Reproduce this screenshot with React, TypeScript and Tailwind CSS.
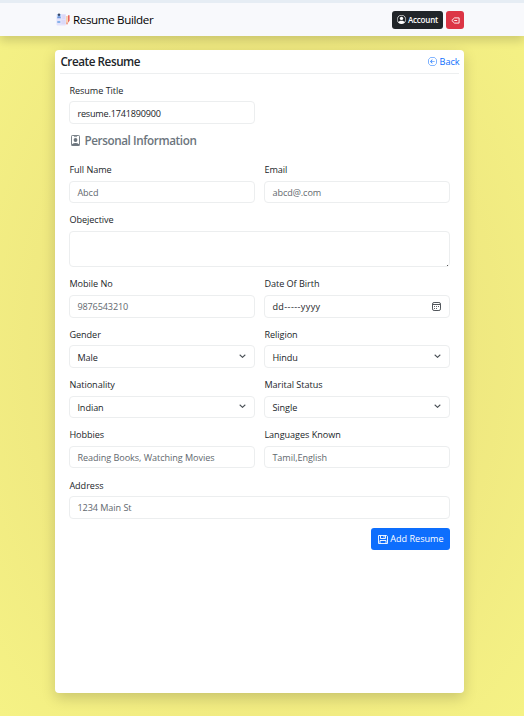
import React from "react";
import { BsPersonCircle, BsArrowLeftCircle } from "react-icons/bs";

const box =
  "flex h-[22.4px] w-full items-center rounded-[4px] border border-[#eceeef] bg-white px-[7px] pt-px text-[9.1px] leading-none whitespace-nowrap";

function Label({ text }: { text: string }) {
  return (
    <div className="mb-[4.4px] flex h-[13.6px] items-center text-[9.1px] leading-none whitespace-nowrap text-[#212529]">
      <span className="tracking-[-0.04px]">{text}</span>
    </div>
  );
}

type FieldProps = {
  label: string;
  value: string;
  muted?: boolean;
  select?: boolean;
  wide?: boolean;
  spacing?: string;
  children?: React.ReactNode;
};

function Field({ label, value, muted, select, wide, spacing = "tracking-[-0.06px]", children }: FieldProps) {
  return (
    <div className={wide ? "col-span-2" : ""}>
      <Label text={label} />
      <div className={`${box} ${muted ? "text-[#62686e]" : "text-[#212529]"}`}>
        <span className={`grow ${spacing}`}>{value}</span>
        {select && (
          <svg className="mr-px -mt-px" width="7" height="5" viewBox="0 0 7 5" fill="none" stroke="#4b5157" strokeWidth="1.1" strokeLinecap="round" strokeLinejoin="round">
            <path d="m1 1 2.5 2.3L6 1" />
          </svg>
        )}
        {children}
      </div>
    </div>
  );
}

function Logo() {
  return (
    <svg width="14" height="14" viewBox="0 0 14 14">
      <rect x="0.5" y="1" width="9.5" height="11.5" rx="1" fill="#e3e2fb" />
      <rect x="1" y="1" width="4" height="4" fill="#b5d0f5" />
      <circle cx="3" cy="1.8" r="1.2" fill="#354665" />
      <path d="M1 5.2Q3 .8 5 5.2Z" fill="#6d97dc" />
      <path d="M6.2 3h2.8M6.2 5h2.8M5.5 8h3.8M5.5 10h3.8" stroke="#cfcbf3" strokeWidth=".8" />
      <rect x="1.3" y="8" width="3" height="2" fill="#86b2ea" />
      <path d="M10.2 3h1.5v7l-.7 1.6-.8-1.6Z" fill="#f8c49a" />
      <path d="M12 2.2h1.6v5.5l-1.6 2Z" fill="#e8655e" />
      <path d="m10.2 9.7.8 2.3.9-2.3Z" fill="#e87866" />
    </svg>
  );
}

function Calendar() {
  return (
    <svg className="mr-px -mt-px" width="9" height="9" viewBox="0 0 9 9" fill="none" stroke="#50555a">
      <rect x=".5" y=".5" width="8" height="8" rx="1.6" />
      <path d="M.5 2.5h8" />
      <path d="M4 4.5h1m1 0h1M2 4.5h1M2 6.5h1m1 0h1" strokeWidth=".9" />
    </svg>
  );
}

function Badge() {
  return (
    <svg width="9" height="11" viewBox="0 0 9 11">
      <rect x=".5" y=".5" width="8" height="10" rx=".8" fill="none" stroke="currentColor" strokeWidth=".9" />
      <path d="M3 1.6h3" stroke="currentColor" strokeWidth=".7" />
      <circle cx="4.5" cy="5" r="1.9" fill="currentColor" />
      <path d="M.6 10.8V9.4Q4.5 6.8 8.4 9.4v1.4Z" fill="currentColor" />
    </svg>
  );
}

function ExitIcon() {
  return (
    <svg width="9" height="7" viewBox="0 0 9 7" fill="none" stroke="currentColor" strokeWidth=".9" strokeLinejoin="round">
      <path d="M.8 3.5 3.5.9h4.6v5.2H3.5Z" />
      <path d="M3.2 3.5h3" />
    </svg>
  );
}

function SaveIcon() {
  return (
    <svg width="10" height="9" viewBox="0 0 10 9" fill="none" stroke="currentColor" strokeWidth=".9">
      <path d="M.5.5h8.2l.8.8v7.2h-9Z" />
      <path d="M2.5.5v3h5v-3M2 8.5v-3h6v3M6 1v1.5" />
    </svg>
  );
}

export default function App() {
  return (
    <div className="flex h-[716px] w-[524px] flex-col overflow-hidden bg-[radial-gradient(ellipse_at_center,#ebe37c_0%,#efe880_55%,#f5f285_100%)] font-['Open_Sans','Noto_Sans',sans-serif]">
      <header className="flex h-9 shrink-0 items-center justify-between border-t-[3px] border-[#e6edf4] bg-[#f8f9fc] pr-[60px] pl-[56px] shadow-[0_5px_9px_rgba(0,0,0,0.15)]">
        <div className="flex items-center gap-[3px]">
          <Logo />
          <span className="pt-px text-[11.6px] leading-none tracking-[-0.36px] text-black">Resume Builder</span>
        </div>
        <div className="flex gap-[3px]">
          <div className="flex h-[18px] w-[51px] items-center justify-center gap-[2px] rounded-[3px] bg-[#212529] text-white">
            <BsPersonCircle className="size-[9px]" />
            <span className="pt-px text-[8px] leading-none font-semibold tracking-[-0.18px]">Account</span>
          </div>
          <div className="flex h-[18px] w-[18px] items-center justify-center rounded-[3px] bg-[#dc3545] pt-px text-white">
            <ExitIcon />
          </div>
        </div>
      </header>
      <main className="mt-[14px] ml-[55.4px] h-[643px] w-[409px] rounded-[4px] bg-white px-[5px] shadow-[0_5px_14px_rgba(0,0,0,0.17)]">
        <div className="flex h-[24px] items-center justify-between border-b border-[#edeff0]">
          <h1 className="text-[11.7px] leading-none font-semibold tracking-[-0.45px] text-[#212529]">Create Resume</h1>
          <div className="flex items-center gap-[3px] pt-px text-[#0d6efd]">
            <BsArrowLeftCircle className="size-[9px]" />
            <span className="text-[9.2px] leading-none tracking-[-0.12px]">Back</span>
          </div>
        </div>
        <div className="mx-[9px] pt-[9.5px]">
          <div className="grid grid-cols-2 gap-x-[9px]">
            <Field label="Resume Title" value="resume.1741890900" spacing="tracking-[-0.2px]" />
          </div>
          <div className="mt-[9px] flex h-[16px] items-center gap-[4px] pl-[2px] text-[#6c757d]">
            <Badge />
            <h2 className="text-[11.7px] leading-none font-semibold tracking-[-0.4px]">Personal Information</h2>
          </div>
          <div className="mt-[14px] grid grid-cols-2 gap-x-[9px] gap-y-[9.9px]">
            <Field label="Full Name" value="Abcd" muted />
            <Field label="Email" value="abcd@.com" muted />
            <div className="col-span-2">
              <Label text="Obejective" />
              <div className="flex h-[36.2px] items-end justify-end rounded-[4px] border border-[#eceeef]">
                <span className="mr-px size-px bg-[#555]" />
              </div>
            </div>
            <Field label="Mobile No" value="9876543210" muted spacing="tracking-[-0.13px]" />
            <Field label="Date Of Birth" value="dd-----yyyy" spacing="tracking-[0.38px]">
              <Calendar />
            </Field>
            <Field label="Gender" value="Male" select />
            <Field label="Religion" value="Hindu" select />
            <Field label="Nationality" value="Indian" select />
            <Field label="Marital Status" value="Single" select />
            <Field label="Hobbies" value="Reading Books, Watching Movies" muted />
            <Field label="Languages Known" value="Tamil,English" muted />
            <Field label="Address" value="1234 Main St" muted wide />
          </div>
          <div className="mt-[9.4px] flex justify-end">
            <div className="flex h-[22px] w-[79px] items-center justify-center gap-[2px] rounded-[3px] bg-[#0d6efd] text-white">
              <SaveIcon />
              <span className="text-[9.1px] leading-none font-medium whitespace-nowrap">Add Resume</span>
            </div>
          </div>
        </div>
      </main>
    </div>
  );
}
